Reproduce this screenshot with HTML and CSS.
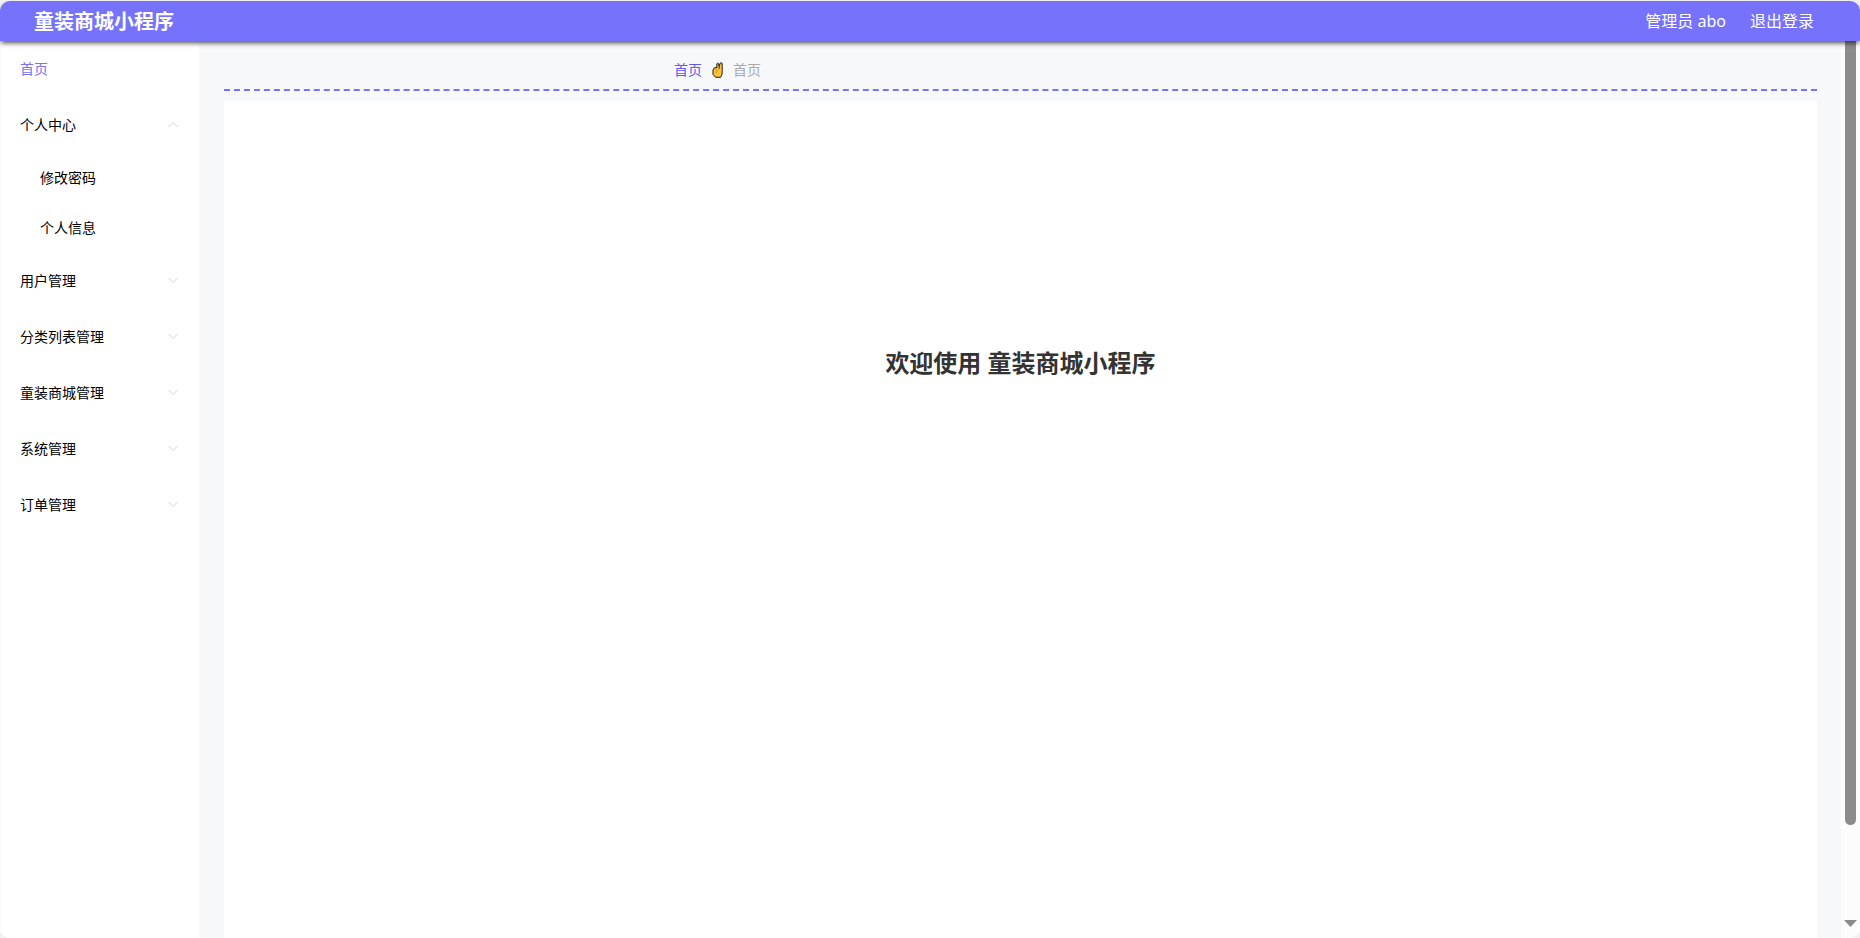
FILE: index.html
```html
<!DOCTYPE html>
<html lang="zh-CN">
<head>
<meta charset="utf-8">
<title>童装商城小程序</title>
<link rel="stylesheet" href="styles.css">
</head>
<body>
<div class="app">
  <header class="header">
    <h1 class="brand">童装商城小程序</h1>
    <div class="account">
      <span>管理员 abo</span>
      <button class="logout" type="button">退出登录</button>
    </div>
  </header>
  <div class="body">
    <nav class="sidebar">
      <a class="item active" href="#">首页</a>
      <button class="item" type="button" aria-expanded="true">个人中心<svg class="arrow" viewBox="0 0 12 12"><path d="M1.5 8 6 3.5 10.5 8"/></svg></button>
      <div class="submenu">
        <a class="subitem" href="#">修改密码</a>
        <a class="subitem" href="#">个人信息</a>
      </div>
      <button class="item" type="button">用户管理<svg class="arrow" viewBox="0 0 12 12"><path d="M1.5 3 6 7.5 10.5 3"/></svg></button>
      <button class="item" type="button">分类列表管理<svg class="arrow" viewBox="0 0 12 12"><path d="M1.5 3 6 7.5 10.5 3"/></svg></button>
      <button class="item" type="button">童装商城管理<svg class="arrow" viewBox="0 0 12 12"><path d="M1.5 3 6 7.5 10.5 3"/></svg></button>
      <button class="item" type="button">系统管理<svg class="arrow" viewBox="0 0 12 12"><path d="M1.5 3 6 7.5 10.5 3"/></svg></button>
      <button class="item" type="button">订单管理<svg class="arrow" viewBox="0 0 12 12"><path d="M1.5 3 6 7.5 10.5 3"/></svg></button>
    </nav>
    <main class="main">
      <div class="breadcrumb">
        <a class="crumb-link" href="#">首页</a>
        <svg class="hand" viewBox="0 0 12 16">
          <path d="M1 8 2.6 5.6 4.9 5.8 4.8 1.8Q5.6.5 6.5 1.6L7.2 4.4 8.1 1.2Q9.4.2 10.2 1.3L10.2 8.5 10 12.4 8.6 15.3H3.6L1 12.4Z" fill="#ffc23a" stroke="#1b1b1b" stroke-width="1" stroke-linejoin="round"/>
          <path d="M7.2 4.4V7.2" fill="none" stroke="#1b1b1b" stroke-width=".8"/>
          <path d="M3 8.4 5 7.8 5.6 9.4 3.6 10.6" fill="none" stroke="#d98a18" stroke-width=".7"/>
        </svg>
        <span class="crumb-current">首页</span>
      </div>
      <section class="content">
        <h2 class="welcome">欢迎使用 童装商城小程序</h2>
      </section>
    </main>
    <div class="scrollbar" aria-hidden="true">
      <div class="thumb"></div>
      <svg class="down" viewBox="0 0 13 7"><path d="M0 0H13L6.5 7Z"/></svg>
    </div>
  </div>
</div>
</body>
</html>
```
FILE: styles.css
```css
* {
  box-sizing: border-box;
}

body {
  margin: 0;
  background: #f1f1f1;
  font-family: "Noto Sans", "Noto Sans CJK SC", sans-serif;
  font-size: 14px;
  line-height: 20px;
  color: #000;
}

a {
  color: inherit;
  text-decoration: none;
}

button {
  border: 0;
  padding: 0;
  background: none;
  font: inherit;
  color: inherit;
  cursor: pointer;
}

.app {
  display: flex;
  flex-direction: column;
  height: 100vh;
  padding-top: 1px;
}

.header {
  display: flex;
  flex: none;
  align-items: center;
  justify-content: space-between;
  height: 40px;
  padding: 0 46px 0 34px;
  border-radius: 10px 10px 0 0;
  background: #7672fb;
  color: #fff;
  box-shadow: 0 3px 5px -1px rgba(0, 0, 0, 0.7);
  z-index: 1;
}

.brand {
  margin: 0;
  padding-top: 2px;
  font-size: 20px;
  line-height: 38px;
  font-weight: 700;
}

.account {
  display: flex;
  gap: 24px;
  font-size: 16px;
  line-height: 40px;
}

.body {
  display: flex;
  flex: 1;
  min-height: 0;
  border-radius: 0 0 10px 10px;
  overflow: hidden;
  background: #f6f8fa;
}

.sidebar {
  flex: none;
  width: 200px;
  border: solid #fafafa;
  border-width: 0 1px;
  background: #fff;
}

.item {
  display: flex;
  align-items: center;
  justify-content: space-between;
  width: 100%;
  height: 56px;
  padding: 0 20px 0 19px;
}

.item.active {
  color: #7672fb;
}

.arrow {
  width: 12px;
  height: 12px;
  fill: none;
  stroke: #e4e4ee;
  stroke-width: 1.1;
}

.subitem {
  display: block;
  padding-left: 39px;
  line-height: 50px;
}

.main {
  display: flex;
  flex: 1;
  flex-direction: column;
  gap: 10px;
  padding: 0 24px;
}

.breadcrumb {
  display: flex;
  align-items: center;
  height: 50px;
  padding: 10px 0 0 450px;
  border-bottom: 2px dashed #7672fb;
}

.crumb-link {
  color: #5f5af6;
}

.hand {
  width: 12px;
  height: 16px;
  margin: 0 9px 0 10px;
}

.crumb-current {
  color: #aaa;
}

.content {
  flex: 1;
  padding-top: 244px;
  background: #fff;
  text-align: center;
}

.welcome {
  margin: 0;
  font-size: 24px;
  line-height: 36px;
  color: #333;
}

.scrollbar {
  display: flex;
  flex: none;
  flex-direction: column;
  align-items: center;
  justify-content: space-between;
  width: 19px;
  padding-bottom: 11px;
  background: #fcfcfc;
}

.thumb {
  width: 11px;
  height: calc(100% - 102px);
  border-radius: 0 0 6px 6px;
  background: #8b8b8b;
}

.down {
  width: 13px;
  height: 7px;
  fill: #8b8b8b;
}
```
